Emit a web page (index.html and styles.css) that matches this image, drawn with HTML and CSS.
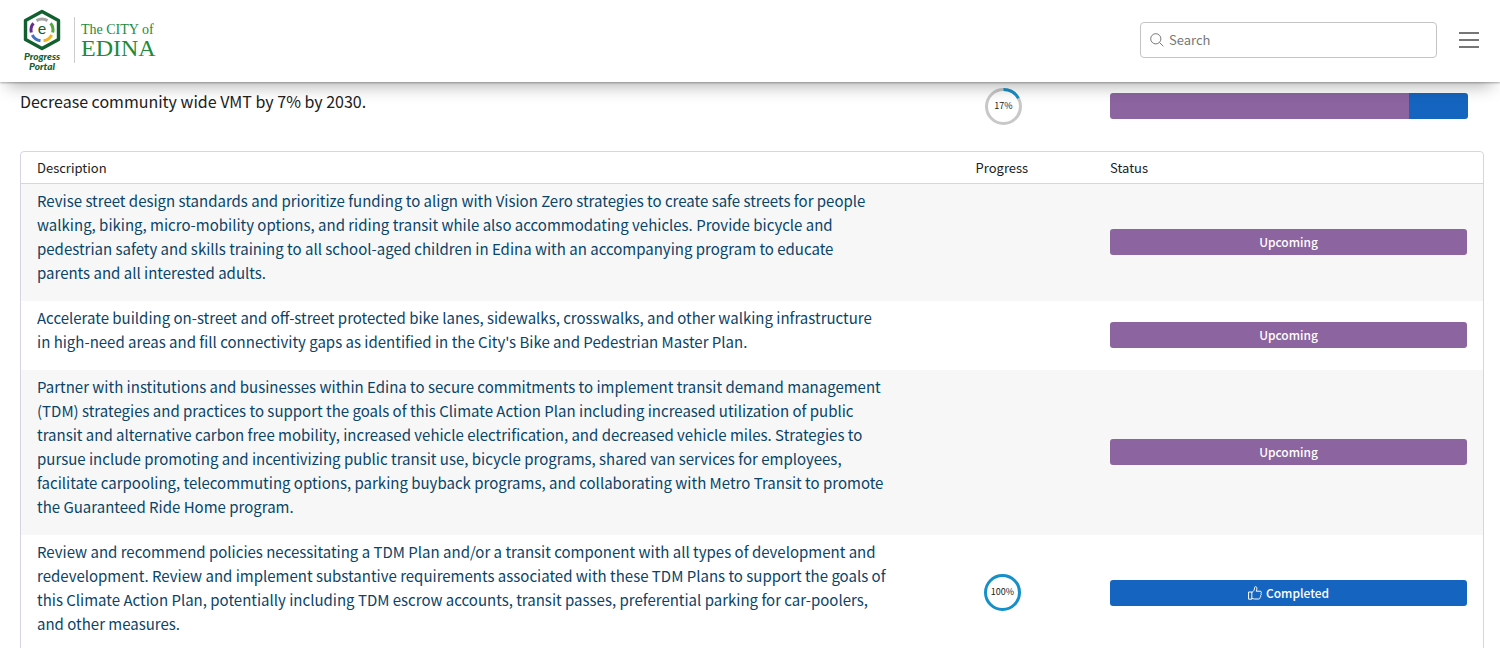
FILE: index.html
```
<!DOCTYPE html>
<html lang="en">
<head>
<meta charset="utf-8">
<title>Progress Portal - The City of Edina</title>
<link rel="stylesheet" href="styles.css">
</head>
<body>

<header class="topbar">
  <a href="#" class="brand">
    <span class="portal">
      <svg class="hexagon" width="40" height="42" viewBox="0 0 40 42" aria-hidden="true">
        <path d="M20 2.500 36.500 11.500V30.500L20 39.500 3.500 30.500V11.500Z" fill="#fff" stroke="#12602f" stroke-width="3.400" stroke-linejoin="round"/>
        <g fill="none" stroke-width="3">
          <path d="M14.500 11.600A10.900 10.900 0 0 1 25.500 11.600" stroke="#a5a5a5"/>
          <path d="M28.600 14.200A10.900 10.900 0 0 1 30.700 23.500" stroke="#56a63f"/>
          <path d="M29.700 26A10.900 10.900 0 0 1 21.500 31.800" stroke="#f2b51d"/>
          <path d="M18.500 31.800A10.900 10.900 0 0 1 10.300 26" stroke="#4472c4"/>
          <path d="M9.300 23.500A10.900 10.900 0 0 1 11.400 14.200" stroke="#662d91"/>
        </g>
        <text class="hex-letter" x="20" y="25" text-anchor="middle">e</text>
      </svg>
      <span class="portal-name">Progress<br>Portal</span>
    </span>
    <span class="city">
      <span class="city-small">The CITY of</span>
      <span class="city-big">EDINA</span>
    </span>
  </a>
  <div class="tools">
    <label class="search">
      <svg width="14" height="14" viewBox="0 0 14 14" fill="none" stroke="#777" aria-hidden="true">
        <circle cx="5.800" cy="5.800" r="5.100"/>
        <path d="M9.500 9.500 13.300 13.300"/>
      </svg>
      <input type="search" placeholder="Search" aria-label="Search">
    </label>
    <button type="button" class="menu" aria-label="Menu">
      <svg width="20" height="18" viewBox="0 0 20 18" stroke="#4a4a4a" stroke-width="1.600" aria-hidden="true">
        <path d="M0 2H20M0 9H20M0 16H20"/>
      </svg>
    </button>
  </div>
</header>

<main>
  <section class="goal">
    <h1>Decrease community wide VMT by 7% by 2030.</h1>
    <div class="goal-progress">
      <svg class="ring" width="37" height="37" viewBox="0 0 37 37" role="img" aria-label="17%">
        <circle class="ring-track" cx="18.500" cy="18.500" r="17"/>
        <circle class="ring-value" cx="18.500" cy="18.500" r="17" pathLength="100" stroke-dasharray="17 83" transform="rotate(-90 18.500 18.500)"/>
        <text x="18.500" y="21" text-anchor="middle">17%</text>
      </svg>
    </div>
    <div class="goal-status">
      <div class="bar">
        <span class="bar-part upcoming" style="width:83.4%"></span>
        <span class="bar-part completed" style="width:16.6%"></span>
      </div>
    </div>
  </section>

  <div class="table-box">
    <table>
      <thead>
        <tr><th class="col-desc">Description</th><th class="col-progress">Progress</th><th>Status</th></tr>
      </thead>
      <tbody>
        <tr>
          <td class="desc"><a href="#">Revise street design standards and prioritize funding to align with Vision Zero strategies to create safe streets for people walking, biking, micro-mobility options, and riding transit while also accommodating vehicles. Provide bicycle and pedestrian safety and skills training to all school-aged children in Edina with an accompanying program to educate parents and all interested adults.</a></td>
          <td></td>
          <td><div class="status upcoming">Upcoming</div></td>
        </tr>
        <tr>
          <td class="desc"><a href="#">Accelerate building on-street and off-street protected bike lanes, sidewalks, crosswalks, and other walking infrastructure in high-need areas and fill connectivity gaps as identified in the City's Bike and Pedestrian Master Plan.</a></td>
          <td></td>
          <td><div class="status upcoming">Upcoming</div></td>
        </tr>
        <tr>
          <td class="desc"><a href="#">Partner with institutions and businesses within Edina to secure commitments to implement transit demand management (TDM) strategies and practices to support the goals of this Climate Action Plan including increased utilization of public transit and alternative carbon free mobility, increased vehicle electrification, and decreased vehicle miles. Strategies to pursue include promoting and incentivizing public transit use, bicycle programs, shared van services for employees, facilitate carpooling, telecommuting options, parking buyback programs, and collaborating with Metro Transit to promote the Guaranteed Ride Home program.</a></td>
          <td></td>
          <td><div class="status upcoming">Upcoming</div></td>
        </tr>
        <tr>
          <td class="desc"><a href="#">Review and recommend policies necessitating a TDM Plan and/or a transit component with all types of development and redevelopment. Review and implement substantive requirements associated with these TDM Plans to support the goals of this Climate Action Plan, potentially including TDM escrow accounts, transit passes, preferential parking for car-poolers, and other measures.</a></td>
          <td class="progress">
            <svg class="ring" width="37" height="37" viewBox="0 0 37 37" role="img" aria-label="100%">
              <circle class="ring-value" cx="18.500" cy="18.500" r="17"/>
              <text x="18.500" y="21" text-anchor="middle">100%</text>
            </svg>
          </td>
          <td>
            <div class="status completed">
              <svg width="14" height="14" viewBox="0 0 14 14" fill="none" stroke="#fff" stroke-linejoin="round" aria-hidden="true">
                <path d="M.600 6H3.800V13.200H.600ZM3.800 6.500C5.500 5.500 6.500 4 6.700 1.300 6.900.300 8.800.400 8.900 2.200 9 3.400 8.500 4.300 8.200 5.200H12.200C13.700 5.200 13.700 7 12.900 7.400 13.600 8 13.400 9.100 12.600 9.500 13 10.300 12.700 11 12 11.300 12.200 12.500 11.500 13 10.500 13H6.500C5.500 13 4.800 12.500 3.800 12.300"/>
              </svg>
              Completed
            </div>
          </td>
        </tr>
      </tbody>
    </table>
  </div>
</main>

</body>
</html>
```
FILE: styles.css
```
* { box-sizing: border-box; }
body {
  margin: 0;
  background: #fff;
  color: #212121;
  font: 16px/24px "Noto Sans CJK SC", "Open Sans", sans-serif;
}
a { color: #0a4468; text-decoration: none; }

/* header */
.topbar {
  position: sticky;
  top: 0;
  z-index: 10;
  display: flex;
  align-items: center;
  justify-content: space-between;
  height: 82px;
  padding: 0 21px 2px;
  background: #fff;
  box-shadow: 0 12px 16px -8px rgba(0,0,0,.3), 0 1px 2px rgba(0,0,0,.3);
}
.brand { display: flex; align-items: center; gap: 11px; }
.portal { display: flex; flex-direction: column; align-items: center; width: 42px; }
.hex-letter { font: 16px Lato, sans-serif; fill: #12602f; }
.portal-name {
  font: italic 900 10px/10px Lato, sans-serif;
  color: #12602f;
  text-align: center;
}
.city {
  display: flex;
  flex-direction: column;
  padding: 5px 0 5px 6px;
  border-left: 1px solid #ccc;
  font-family: "Liberation Serif", serif;
  color: #1d8a3e;
}
.city-small { font-size: 14px; line-height: 16px; }
.city-big { font-size: 24px; line-height: 20px; }
.tools { display: flex; align-items: center; gap: 22px; }
.search {
  display: flex;
  align-items: center;
  gap: 5px;
  width: 297px;
  height: 36px;
  padding: 0 9px;
  border: 1px solid #c4c4c4;
  border-radius: 4px;
}
.search input {
  flex: 1;
  min-width: 0;
  padding: 0;
  border: 0;
  outline: 0;
  background: none;
  font: 13px/20px "Noto Sans CJK SC", sans-serif;
}
.search input::placeholder { color: #777; }
.menu { display: flex; padding: 0; border: 0; background: none; }

/* goal summary */
main { padding: 0 16px 0 20px; }
.goal { display: flex; padding: 6px 0 26px; }
.goal h1 { width: 64%; margin: 0; padding-top: 1px; font-size: 16px; font-weight: 400; }
.goal-progress { width: 10%; padding-left: 28px; }
.goal-status { flex: 1; padding: 5px 16px 0 7px; }
.bar { display: flex; height: 26px; border-radius: 3px; overflow: hidden; }
.bar-part { height: 100%; }
.upcoming { background: #8c64a0; }
.completed { background: #1565c0; }

.ring { display: block; }
.ring circle { fill: none; stroke-width: 3; }
.ring-track { stroke: #c8c8c8; }
.ring-value { stroke: #1590c8; }
.ring text { font-size: 9px; fill: #212121; }

/* actions table */
.table-box { border: 1px solid #d4d6e6; border-radius: 4px; }
table { width: 100%; border-collapse: collapse; table-layout: fixed; }
th {
  padding: 4px 16px 3px;
  border-bottom: 1px solid #d4d6e6;
  font-size: 13px;
  font-weight: 400;
  text-align: left;
}
.col-desc { width: 64.2%; }
.col-progress { width: 9.2%; }
td { padding: 5px 16px 16px; }
tbody tr:nth-child(odd) td { background: #f7f7f7; }
td.desc { padding-right: 72px; font-size: 15px; }
td + td { padding-top: 9px; padding-bottom: 11px; }
td.progress { padding-left: 24px; }
.status {
  display: flex;
  align-items: center;
  justify-content: center;
  gap: 4px;
  height: 26px;
  border-radius: 3px;
  color: #fff;
  font-size: 12px;
  font-weight: 500;
}
```
